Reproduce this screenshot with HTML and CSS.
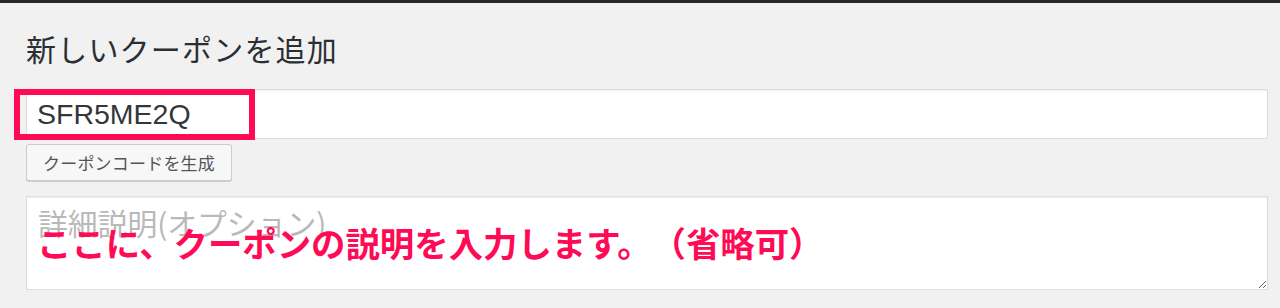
FILE: index.html
```html
<!DOCTYPE html>
<html lang="ja">
<head>
<meta charset="utf-8">
<title>新しいクーポンを追加</title>
<link rel="stylesheet" href="styles.css">
</head>
<body>
<div class="topbar"></div>
<main class="wrap">
  <h1 class="title">新しいクーポンを追加</h1>
  <div class="field">
    <input class="code-input" type="text" value="SFR5ME2Q">
    <span class="highlight"></span>
  </div>
  <button class="gen-btn" type="button">クーポンコードを生成</button>
  <div class="desc">
    <textarea class="desc-area" placeholder="詳細説明(オプション)"></textarea>
    <p class="note">ここに、クーポンの説明を入力します。（省略可）</p>
  </div>
</main>
</body>
</html>
```

FILE: styles.css
```css
html, body {
  margin: 0;
  padding: 0;
  background: #f1f1f1;
  font-family: "Noto Sans CJK JP", "Liberation Sans", sans-serif;
}
.topbar {
  height: 3px;
  background: #23282d;
}
.wrap {
  padding: 0 12px 0 26px;
  display: flex;
  flex-direction: column;
  align-items: flex-start;
}
.title {
  margin: 25px 0 21px;
  font-size: 30px;
  line-height: 40px;
  font-weight: 400;
  color: #2b2f33;
  letter-spacing: 1.2px;
}
.field {
  position: relative;
  width: 100%;
}
.code-input {
  display: block;
  box-sizing: border-box;
  width: 100%;
  height: 50px;
  margin: 0;
  padding: 0 10px;
  border: 1px solid #ddd;
  background: #fff;
  box-shadow: inset 0 1px 2px rgba(0,0,0,0.07);
  font-family: "Liberation Sans", "Noto Sans", sans-serif;
  font-size: 28.5px;
  color: #32373c;
  outline: none;
}
.highlight {
  position: absolute;
  left: -12px;
  top: 0;
  width: 241px;
  height: 51px;
  box-sizing: border-box;
  border: 6.5px solid #fe0a55;
  pointer-events: none;
}
.gen-btn {
  margin-top: 5px;
  height: 37px;
  padding: 0 16px;
  border: 1px solid #ccc;
  border-radius: 3px;
  background: #f7f7f7;
  box-shadow: 0 1px 0 #ccc;
  font-family: "Noto Sans CJK JP", sans-serif;
  font-size: 17px;
  letter-spacing: 0.2px;
  color: #555;
  line-height: 35px;
}
.desc {
  position: relative;
  width: 100%;
  margin-top: 15px;
}
.desc-area {
  display: block;
  box-sizing: border-box;
  width: 100%;
  height: 94px;
  margin: 0;
  padding: 5px 11px 4px;
  border: 1px solid #ddd;
  background: #fff;
  box-shadow: inset 0 1px 2px rgba(0,0,0,0.07);
  font-family: "Noto Sans CJK JP", sans-serif;
  font-size: 29.8px;
  line-height: 40px;
  color: #32373c;
  outline: none;
  text-spacing-trim: space-all;
}
.desc-area::placeholder {
  color: #b9b9b9;
}
.note {
  position: absolute;
  left: 11px;
  top: 29px;
  margin: 0;
  font-family: "Noto Sans CJK JP", sans-serif;
  font-weight: 700;
  font-size: 34.4px;
  line-height: 34px;
  color: #fe0a55;
  white-space: nowrap;
  pointer-events: none;
  text-spacing-trim: space-all;
}
```
